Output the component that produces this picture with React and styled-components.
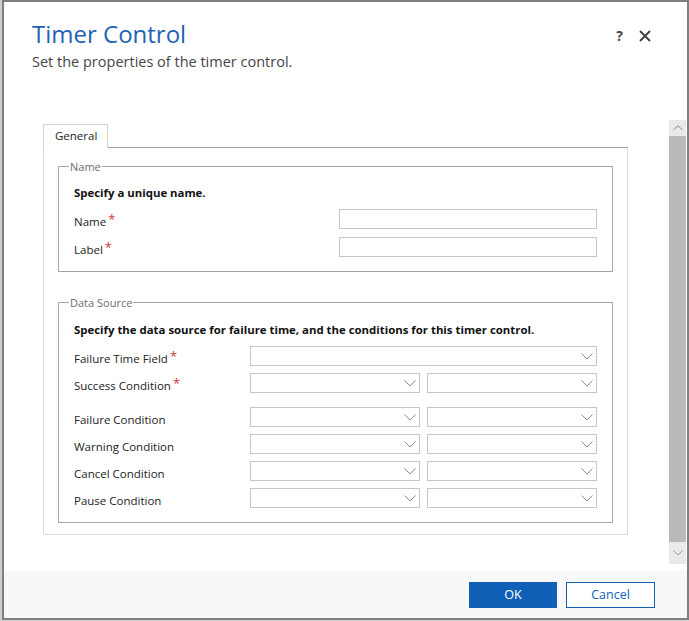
import React from "react";
import styled, { createGlobalStyle } from "styled-components";

const GlobalStyle = createGlobalStyle`
  html, body { margin: 0; padding: 0; }
  body {
    background: #cfcfcf;
    font-family: "Open Sans", "Noto Sans", sans-serif;
    color: #222;
  }
  * { box-sizing: border-box; }
`;

const Dialog = styled.div`
  margin-left: 2px;
  width: 687px;
  height: 620px;
  border: 2px solid #7f7f7f;
  background: #fff;
  display: flex;
  flex-direction: column;
`;

const Header = styled.header`
  height: 118px;
  flex: none;
  display: flex;
  justify-content: space-between;
  align-items: flex-start;
  padding: 15px 36px 0 28px;
`;

const TitleBlock = styled.div`
  display: flex;
  flex-direction: column;
`;

const Title = styled.h1`
  margin: 0;
  font-weight: 400;
  font-size: 24px;
  line-height: 34px;
  color: #1f63b5;
`;

const Subtitle = styled.p`
  margin: 1px 0 0 0;
  font-size: 14.5px;
  line-height: 20px;
  color: #454545;
`;

const HeaderActions = styled.div`
  display: flex;
  align-items: center;
  gap: 16px;
  padding-top: 11px;
`;

const HelpGlyph = styled.span`
  font-size: 14px;
  font-weight: 700;
  line-height: 16px;
  color: #444;
`;

const CloseButton = styled.span`
  display: flex;
  width: 12px;
  height: 12px;
`;

const Body = styled.div`
  flex: 1;
  display: flex;
  min-height: 0;
`;

const Content = styled.div`
  flex: 1;
  padding: 4px 0 0 39px;
`;

const TabStrip = styled.div`
  display: flex;
`;

const Tab = styled.div`
  position: relative;
  z-index: 1;
  margin-bottom: -1px;
  width: 65px;
  height: 24px;
  border: 1px solid #d2d2d2;
  border-bottom: none;
  background: #fff;
  font-size: 11.5px;
  line-height: 22px;
  padding-left: 11px;
  color: #222;
`;

const Panel = styled.div`
  width: 585px;
  border: 1px solid #dcdcdc;
  border-top-color: #a3a3a3;
  padding: 12px 14px 11px 14px;
`;

const Group = styled.fieldset`
  margin: ${(p) => (p.$first ? "0" : "24px 0 0 0")};
  padding: 0 15px 14px 15px;
  border: 1px solid #a6a6a6;
  min-width: 0;
`;

const Legend = styled.legend`
  margin-left: -5px;
  padding: 0 1px;
  font-size: 11px;
  line-height: 13px;
  color: #6d6d6d;
`;

const Heading = styled.div`
  margin: ${(p) => (p.$top ? `${p.$top}px` : "12px")} 0 8px 0;
  font-size: 11.4px;
  font-weight: 700;
  line-height: 16px;
  color: #111;
`;

const NameGrid = styled.div`
  display: grid;
  grid-template-columns: 265px 258px;
  row-gap: 8px;
`;

const SourceGrid = styled.div`
  display: grid;
  grid-template-columns: 169px 170px 170px;
  column-gap: 7px;
  row-gap: 7px;
`;

const FieldLabel = styled.label`
  font-size: 11.5px;
  line-height: 15px;
  padding-top: 5px;
  color: #222;
  white-space: nowrap;
  margin-top: ${(p) => p.$gap || 0}px;
`;

const Required = styled.span`
  color: #d3363a;
  font-size: 13px;
  margin-left: 2px;
  vertical-align: 2px;
  line-height: 0;
`;

const TextInput = styled.input`
  height: 20px;
  width: 100%;
  border: 1px solid #c6c6c6;
  margin: 0;
  padding: 0 4px;
  font: inherit;
  background: #fff;
`;

const SelectBox = styled.div`
  height: 20px;
  border: 1px solid #c6c6c6;
  background: #fff;
  display: flex;
  align-items: center;
  justify-content: flex-end;
  padding-right: 3px;
  margin-top: ${(p) => p.$gap || 0}px;
  grid-column: ${(p) => (p.$wide ? "2 / span 2" : "auto")};
`;

const Scrollbar = styled.div`
  width: 17px;
  margin: 0 1px 7px 0;
  display: flex;
  flex-direction: column;
  background: #e9e9e9;
`;

const ScrollButton = styled.div`
  height: ${(p) => p.$h}px;
  display: flex;
  align-items: center;
  justify-content: center;
  background: #e9e9e9;
`;

const Thumb = styled.div`
  flex: 1;
  background: #b9b9b9;
`;

const Footer = styled.footer`
  height: 47px;
  flex: none;
  background: #f8f8f8;
  display: flex;
  justify-content: flex-end;
  align-items: center;
  gap: 9px;
  padding: 0 32px 0 0;
`;

const Button = styled.button`
  height: 26px;
  width: ${(p) => (p.$primary ? 88 : 89)}px;
  margin: 0;
  border: 1px solid #1160b7;
  background: ${(p) => (p.$primary ? "#1160b7" : "#fff")};
  color: ${(p) => (p.$primary ? "#fff" : "#1160b7")};
  font-family: "Open Sans", "Noto Sans", sans-serif;
  font-size: 12.5px;
  cursor: pointer;
`;

const Chevron = ({ up, color = "#8a8a8a", w = 12, h = 6 }) => (
  <svg width={w} height={h + 1} viewBox={`0 0 ${w} ${h + 1}`} fill="none">
    <path
      d={up ? `M0.5 ${h} L${w / 2} 0.8 L${w - 0.5} ${h}` : `M0.5 0.5 L${w / 2} ${h} L${w - 0.5} 0.5`}
      stroke={color}
      strokeWidth="1"
    />
  </svg>
);

const Select = ({ wide, gap }) => (
  <SelectBox $wide={wide} $gap={gap}>
    <Chevron />
  </SelectBox>
);

const Label = ({ text, required, gap }) => (
  <FieldLabel $gap={gap}>
    {text}
    {required && <Required>*</Required>}
  </FieldLabel>
);

const conditions = [
  { text: "Success Condition", required: true },
  { text: "Failure Condition", gap: 7 },
  { text: "Warning Condition" },
  { text: "Cancel Condition" },
  { text: "Pause Condition" },
];

export default function App() {
  return (
    <>
      <GlobalStyle />
      <Dialog>
        <Header>
          <TitleBlock>
            <Title>Timer Control</Title>
            <Subtitle>Set the properties of the timer control.</Subtitle>
          </TitleBlock>
          <HeaderActions>
            <HelpGlyph>?</HelpGlyph>
            <CloseButton>
              <svg width="12" height="12" viewBox="0 0 12 12">
                <path d="M1 1 L11 11 M11 1 L1 11" stroke="#444" strokeWidth="2" />
              </svg>
            </CloseButton>
          </HeaderActions>
        </Header>
        <Body>
          <Content>
            <TabStrip>
              <Tab>General</Tab>
            </TabStrip>
            <Panel>
              <Group $first>
                <Legend>Name</Legend>
                <Heading>Specify a unique name.</Heading>
                <NameGrid>
                  <Label text="Name" required />
                  <TextInput />
                  <Label text="Label" required />
                  <TextInput />
                </NameGrid>
              </Group>
              <Group>
                <Legend>Data Source</Legend>
                <Heading $top={13}>
                  Specify the data source for failure time, and the conditions for this timer control.
                </Heading>
                <SourceGrid>
                  <Label text="Failure Time Field" required />
                  <Select wide />
                  {conditions.map((c) => (
                    <React.Fragment key={c.text}>
                      <Label text={c.text} required={c.required} gap={c.gap} />
                      <Select gap={c.gap} />
                      <Select gap={c.gap} />
                    </React.Fragment>
                  ))}
                </SourceGrid>
              </Group>
            </Panel>
          </Content>
          <Scrollbar>
            <ScrollButton $h={16}>
              <Chevron up w={10} h={5} color="#8c8c8c" />
            </ScrollButton>
            <Thumb />
            <ScrollButton $h={22}>
              <Chevron w={10} h={5} color="#9a9a9a" />
            </ScrollButton>
          </Scrollbar>
        </Body>
        <Footer>
          <Button $primary>OK</Button>
          <Button>Cancel</Button>
        </Footer>
      </Dialog>
    </>
  );
}
